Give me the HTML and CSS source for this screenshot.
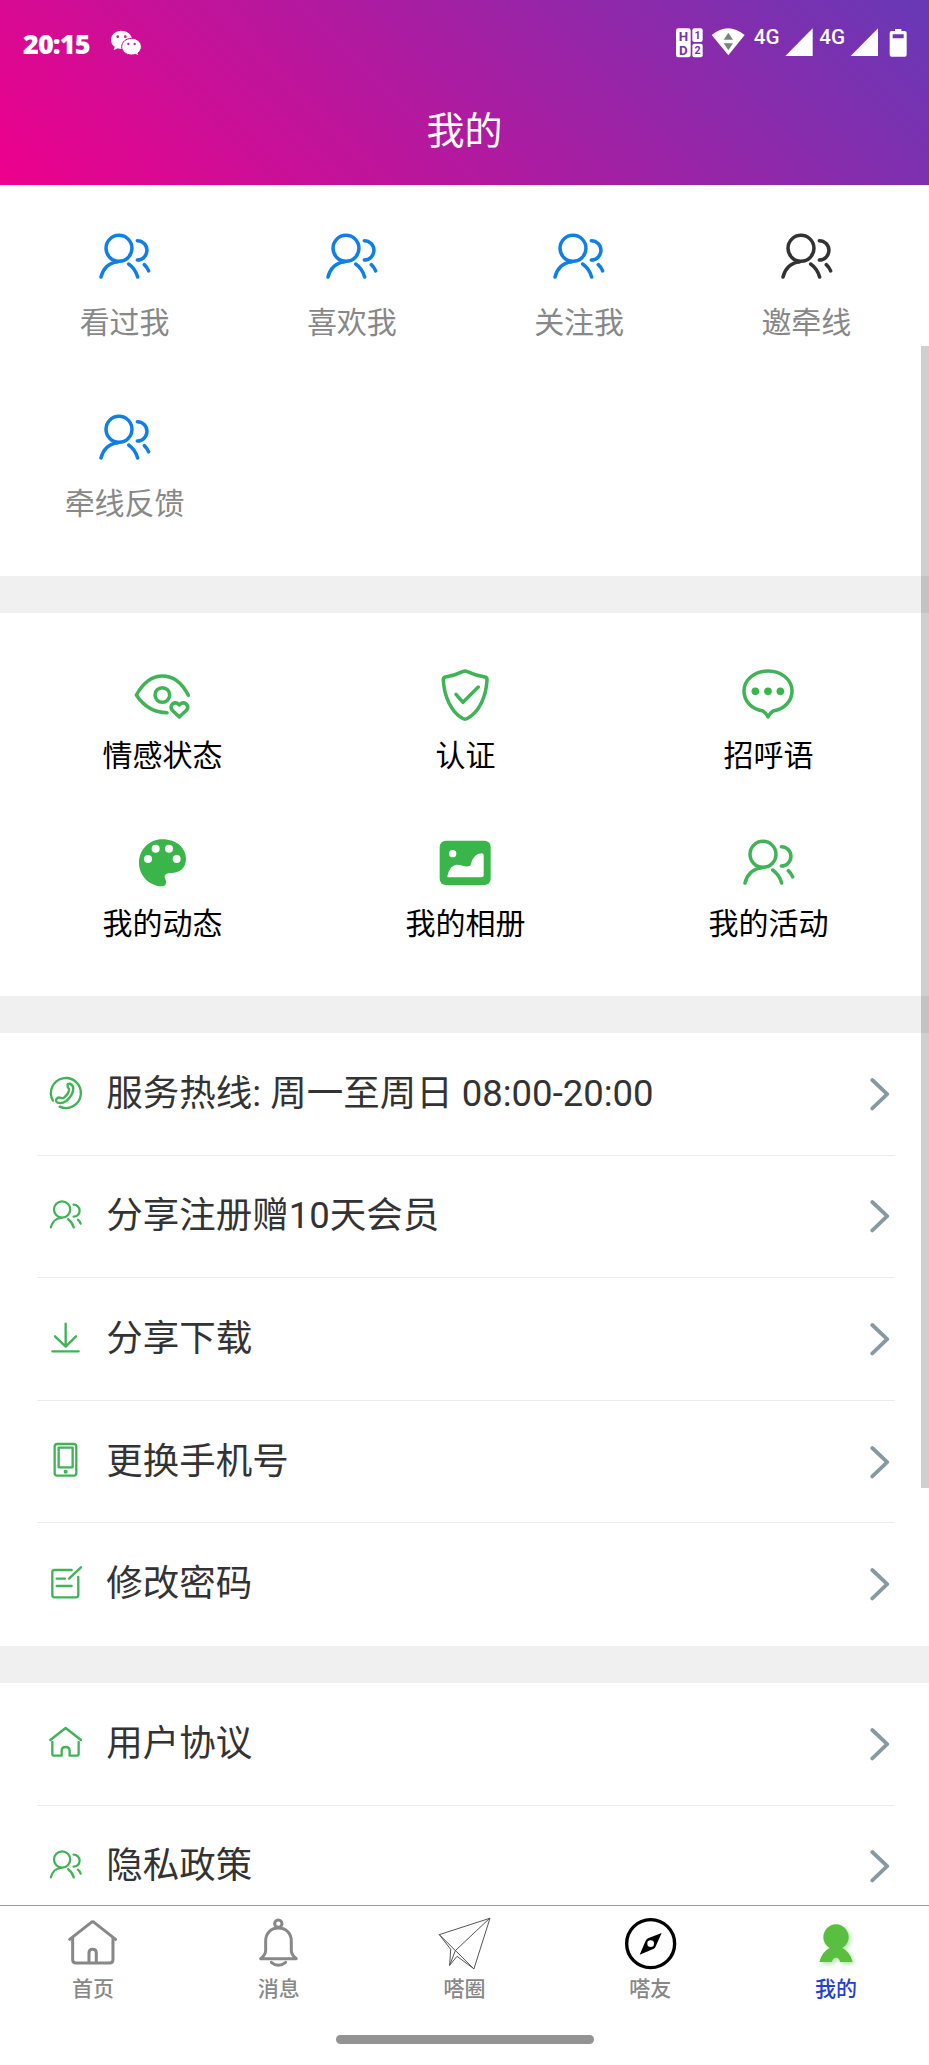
FILE: index.html
```html
<!DOCTYPE html>
<html lang="zh-CN">
<head>
<meta charset="utf-8">
<title>我的</title>
<link rel="stylesheet" href="styles.css">
</head>
<body>
<svg class="defs" aria-hidden="true">
  <symbol id="people" viewBox="0 0 160 160"><circle cx="63" cy="55" r="39"/><path d="M9 141C15 117 33 97 58 96M92 102Q112 116 119 141M118 32A29 29 0 0 1 118 90M139 104Q148 112 152 123"/></symbol>
  <symbol id="chevron" viewBox="0 0 20 34"><path d="M2.3 3L17.2 17.2L2.3 31.4"/></symbol>
</svg>
<div class="screen">
  <header class="header">
    <div class="status">
      <span class="time">20:15</span>
      <svg class="wechat" viewBox="330 88 98 84"><path d="M364 93C346 93 333 105 333 120C333 130 337 137 344 141L341 152L353 146Q358 148 364 148C382 148 396 136 396 120C396 105 382 93 364 93Z"/><path class="front" d="M395 116C378 116 365 127 365 141C365 155 378 166 395 166Q401 166 406 164L416 169L414 160C420 155 424 149 424 141C424 127 411 116 395 116Z"/><g class="eyes"><circle cx="353" cy="111" r="4"/><circle cx="376" cy="111" r="4"/><circle cx="385" cy="133" r="3.5"/><circle cx="404" cy="133" r="3.5"/></g></svg>
      <svg class="signals" viewBox="160 75 710 105">
        <rect x="169" y="85" width="44" height="87" rx="7"/><rect x="218" y="85" width="31" height="41" rx="6"/><rect x="218" y="131" width="31" height="41" rx="6"/>
        <g class="hd"><text x="191" y="122" font-size="40">H</text><text x="191" y="165" font-size="40">D</text><text x="234" y="118" font-size="32">1</text><text x="234" y="163" font-size="32">2</text></g>
        <path d="M276 105Q325 64 375 105L326 166Z"/><path class="net" d="M312 119L326 98L340 119ZM312 130H340L326 151Z"/>
        <text class="g4" x="402" y="131">4G</text><path d="M579 85V168H497Z"/>
        <text class="g4" x="599" y="131">4G</text><path d="M775 85V168H693Z"/>
        <path fill-rule="evenodd" d="M826 87H845V93H855Q861 93 861 99V164Q861 170 855 170H816Q810 170 810 164V99Q810 93 816 93H826ZM819 103V115H852V103Z"/>
      </svg>
    </div>
    <h1 class="title">我的</h1>
  </header>

  <main class="content">
    <section class="grid grid-four">
      <div class="cell"><svg class="icon-people blue"><use href="#people"/></svg><span>看过我</span></div>
      <div class="cell"><svg class="icon-people blue"><use href="#people"/></svg><span>喜欢我</span></div>
      <div class="cell"><svg class="icon-people blue"><use href="#people"/></svg><span>关注我</span></div>
      <div class="cell"><svg class="icon-people dark"><use href="#people"/></svg><span>邀牵线</span></div>
      <div class="cell"><svg class="icon-people blue"><use href="#people"/></svg><span>牵线反馈</span></div>
    </section>

    <section class="grid grid-three">
      <div class="cell"><div class="icon-box"><svg class="icon-menu" viewBox="0 0 180 180"><path d="M169 91Q140 33 91 33Q45 33 13 90Q48 143 105 143"/><circle cx="91" cy="90" r="22"/><path d="M142 156L120 135Q114 126 121 117Q133 109 142 120Q151 109 163 117Q171 126 164 135Z"/></svg></div><span>情感状态</span></div>
      <div class="cell"><div class="icon-box"><svg class="icon-menu" viewBox="0 0 180 180"><path d="M83 20Q90 16 97 20Q122 32 150 36Q157 38 156 46C153 95 133 140 98 160Q90 165 82 160C48 140 28 95 25 46Q24 38 31 36Q59 32 83 20Z"/><path d="M63 88L84 112L130 66"/></svg></div><span>认证</span></div>
      <div class="cell"><div class="icon-box"><svg class="icon-menu" viewBox="0 0 180 180"><path d="M75 138C40 132 18 108 18 78C18 44 50 18 90 18C130 18 162 44 162 78C162 108 140 132 105 138Q96 144 90 156Q84 144 75 138Z"/><g class="solid"><circle cx="52" cy="79" r="11.5"/><circle cx="90" cy="79" r="11.5"/><circle cx="127" cy="79" r="11.5"/></g></svg></div><span>招呼语</span></div>
      <div class="cell"><div class="icon-box"><svg class="icon-menu" viewBox="0 0 180 180"><path class="solid" d="M91 19C135 19 162 46 162 78C162 105 142 120 118 120C102 119 94 127 100 138C105 150 101 160 90 160C55 160 21 130 21 90C21 50 52 19 91 19Z"/><g class="hole"><circle cx="48" cy="78" r="12"/><circle cx="71" cy="47" r="12"/><circle cx="111" cy="47" r="12"/><circle cx="134" cy="78" r="12"/></g></svg></div><span>我的动态</span></div>
      <div class="cell"><div class="icon-box"><svg class="icon-menu" viewBox="0 0 180 180"><rect class="solid" x="14" y="23" width="153" height="133" rx="18"/><g class="hole"><circle cx="53" cy="62" r="11"/><path d="M41 133Q35 133 38 126Q46 95 66 95C80 95 96 106 107 96Q114 62 140 61Q146 61 146 67V127Q146 133 140 133Z"/></g></svg></div><span>我的相册</span></div>
      <div class="cell"><div class="icon-box"><svg class="icon-people green"><use href="#people"/></svg></div><span>我的活动</span></div>
    </section>

    <ul class="list">
      <li class="row"><svg class="icon-row" viewBox="0 0 100 100"><path d="M12 74A45 45 0 1 1 32 92M56 30Q54 22 62 23Q72 26 73 37Q73 58 52 75Q38 84 26 80Q18 76 23 68Q28 62 36 66Q42 68 46 64Q58 54 60 44Q61 38 58 36Q55 33 56 30Z"/></svg><span>服务热线: 周一至周日 08:00-20:00</span><svg class="arrow"><use href="#chevron"/></svg></li>
      <li class="row"><svg class="icon-row small-people"><use href="#people"/></svg><span>分享注册赠10天会员</span><svg class="arrow"><use href="#chevron"/></svg></li>
      <li class="row"><svg class="icon-row" viewBox="0 0 100 100"><path d="M50 8V76M18 46L50 77L81 46M10 91H89"/></svg><span>分享下载</span><svg class="arrow"><use href="#chevron"/></svg></li>
      <li class="row"><svg class="icon-row" viewBox="0 0 100 100"><rect x="17" y="3" width="65" height="95" rx="8"/><rect x="29" y="14" width="42" height="59"/><circle class="solid" cx="50" cy="86" r="6"/></svg><span>更换手机号</span><svg class="arrow"><use href="#chevron"/></svg></li>
      <li class="row"><svg class="icon-row" viewBox="0 0 100 100"><path d="M68 12H17Q10 12 10 19V87Q10 94 17 94H81Q88 94 88 87V33M60 38L96 4M23 38H48M23 60H68"/></svg><span>修改密码</span><svg class="arrow"><use href="#chevron"/></svg></li>
    </ul>

    <ul class="list">
      <li class="row"><svg class="icon-row" viewBox="0 0 100 100"><path d="M4 42L50 6L96 42M10 48V83Q10 89 16 89H38V74Q38 63 50 63Q62 63 62 74V89H83Q89 89 89 83V48"/></svg><span>用户协议</span><svg class="arrow"><use href="#chevron"/></svg></li>
      <li class="row"><svg class="icon-row small-people"><use href="#people"/></svg><span>隐私政策</span><svg class="arrow"><use href="#chevron"/></svg></li>
    </ul>
  </main>

  <nav class="tabs">
    <a class="tab"><svg viewBox="0 0 160 160"><path d="M11 67L75 17Q80 12 85 17L149 67M20 62V128Q20 138 30 138H131Q141 138 141 128V62M69 136V108Q69 97 80 97Q91 97 91 108V136"/></svg><span>首页</span></a>
    <a class="tab"><svg viewBox="0 0 160 160"><circle cx="79" cy="20" r="11"/><path d="M26 125Q41 114 41 100V72C41 50 56 33 79 33C103 33 118 50 118 72V100Q118 114 133 125ZM58 136Q79 154 101 136"/></svg><span>消息</span></a>
    <a class="tab"><svg class="plane" viewBox="0 0 160 160"><path d="M155 4L4 53L107 155ZM155 4L52 101L35 145L57 118L107 155M4 53L38 97L35 145"/></svg><span>嗒圈</span></a>
    <a class="tab"><svg class="compass" viewBox="0 0 160 160"><circle cx="80" cy="80" r="72"/><path d="M113 48L94 91Q91 95 86 97L47 113L65 71Q68 65 74 63ZM80 70A10 10 0 1 0 80 90A10 10 0 1 0 80 70Z"/></svg><span>嗒友</span></a>
    <a class="tab active"><svg class="user" viewBox="0 0 160 160"><path d="M62 93A38 38 0 1 1 100 93Q124 105 131 135H93A12 13 0 0 0 69 135H31Q38 105 62 93Z"/></svg><span>我的</span></a>
    <div class="home-bar"></div>
  </nav>
  <div class="scrollbar"></div>
</div>
</body>
</html>
```
FILE: styles.css
```css
* { box-sizing: border-box; }
body { margin: 0; font-family: Roboto, "Noto Sans CJK SC", sans-serif; color: #333; background: #fff; }
svg { display: block; overflow: visible; flex: none; }
.defs { position: absolute; width: 0; height: 0; }
.screen { position: relative; width: 929px; height: 2065px; display: flex; flex-direction: column; overflow: hidden; }

.header { height: 185px; flex: none; background: linear-gradient(45deg, #ee008c, #6739b6); color: #fff; }
.status { height: 88px; padding: 0 19px 0 23px; display: flex; align-items: center; }
.time { font: 800 27px/30px "Open Sans", sans-serif; width: 87px; letter-spacing: -0.9px; }
.wechat { width: 32.7px; height: 28px; fill: #fff; margin-top: -2px; }
.wechat .front { stroke: #d00a94; stroke-width: 3; }
.wechat .eyes { fill: #b02a90; }
.signals { width: 236.7px; height: 35px; margin-left: auto; fill: #fff; margin-top: -3px; }
.signals .hd { fill: #7b2fae; font-family: Roboto, sans-serif; font-weight: 700; text-anchor: middle; }
.signals .net { fill: #77857c; }
.signals .g4 { font: 500 62px Roboto, sans-serif; }
.title { margin: 0; height: 86px; font-size: 38px; font-weight: 400; line-height: 86px; text-align: center; }

.content { flex: 1; min-height: 0; overflow: hidden; background: #f0f0f0; }
.grid { display: grid; background: #fff; padding: 0 9px 0 11px; align-content: start; }
.cell { display: flex; flex-direction: column; align-items: center; font-size: 30px; line-height: 44px; }
.grid-four { height: 391px; padding-top: 45px; grid-template-columns: repeat(4, 1fr); grid-auto-rows: 181px; color: #888; }
.grid-four .cell { gap: 18px; }
.grid-three { height: 383px; margin-top: 37px; padding-top: 52px; grid-template-columns: repeat(3, 1fr); grid-auto-rows: 168px; color: #000; }
.grid-three .cell { gap: 9px; }
.icon-box { height: 60px; display: flex; align-items: center; }
.icon-people { width: 53.3px; height: 53.3px; fill: none; stroke-width: 10.5; stroke-linecap: round; }
.blue { stroke: #0f7fe6; }
.dark { stroke: #333; }
.green { stroke: #3fb356; }
.icon-menu { width: 60px; height: 60px; margin-right: 1px; fill: none; stroke: #3fb356; stroke-width: 10.5; stroke-linecap: round; stroke-linejoin: round; }
.solid { fill: #39b54a; stroke: none; }
.hole { fill: #fff; stroke: none; }

.list { list-style: none; margin: 37px 0 0; padding: 0 34px 0 37px; background: #fff; }
.row { height: 122.6px; padding: 0 5px 3px 12px; display: flex; align-items: center; font-size: 36.5px; border-bottom: 1.5px solid #ebebeb; }
.row:last-child { border-bottom-color: transparent; }
.row span { margin: 3px 0 0 24px; line-height: 54px; }
.icon-row { width: 33.3px; height: 33.3px; fill: none; stroke: #3fb356; stroke-width: 7; stroke-linecap: round; stroke-linejoin: round; }
.small-people { stroke-width: 11; }
.arrow { width: 20px; height: 34px; margin: 3px 0 0 auto; fill: none; stroke: #8799a3; stroke-width: 3.8; stroke-linecap: round; stroke-linejoin: round; }

.tabs { flex: none; height: 160px; border-top: 1px solid #999; background: #fff; display: grid; grid-template: 129px 1fr / repeat(5, 1fr); }
.tab { display: flex; flex-direction: column; align-items: center; padding-top: 11px; color: #888; font-size: 21px; line-height: 30px; font-weight: 500; }
.tab svg { width: 53.3px; height: 53.3px; margin-bottom: 4px; fill: none; stroke: #888; stroke-width: 9; stroke-linecap: round; stroke-linejoin: round; }
.tab .plane { stroke: #555; stroke-width: 3; }
.tab .compass circle { stroke: #000; stroke-width: 10; }
.tab .compass path { fill: #000; fill-rule: evenodd; stroke: none; }
.tab .user { fill: #5abf40; stroke: none; filter: drop-shadow(2px 2px 2px rgba(90, 191, 64, .45)); }
.tab.active { color: #2340d0; }
.home-bar { grid-column: 1 / -1; justify-self: center; width: 258px; height: 9px; border-radius: 5px; background: #939393; }
.scrollbar { position: absolute; right: 0; top: 346px; width: 8px; height: 1142px; background: rgba(0, 0, 0, .19); }
```
